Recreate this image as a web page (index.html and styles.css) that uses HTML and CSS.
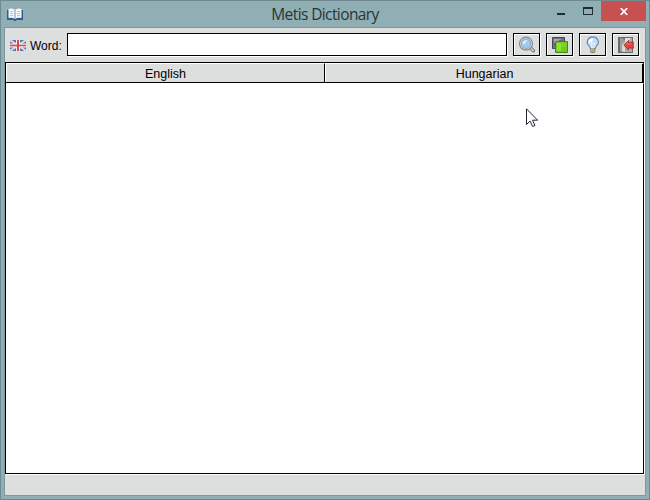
FILE: index.html
```html
<!DOCTYPE html>
<html lang="en">
<head>
<meta charset="utf-8">
<title>Metis Dictionary</title>
<link rel="stylesheet" href="styles.css">
</head>
<body>
<main class="window">
  <header class="titlebar">
    <svg class="app-icon" width="16" height="14" viewBox="0 0 16 14">
      <path d="M0 2h16v10H9.500l-1.500 1.500L6.500 12H0z" fill="#285f98"/>
      <path d="M1.500 1q4-1.500 6.500 1v9q-3-2-6.500-1zM14.500 1q-4-1.500-6.500 1v9q3-2 6.500-1z" fill="#f7f7f7"/>
      <path d="M3 3.500h3M3 5.500h3M3 7.500h3M10 3.500h3M10 5.500h3M10 7.500h3" stroke="#c3c4c4"/>
      <path d="M8 2v9" stroke="#8397a8"/>
    </svg>
    <h1 class="title">Metis Dictionary</h1>
    <div class="controls">
      <button class="control minimize" aria-label="Minimize"><svg width="8" height="2"><path d="M0 0h8v2H0z" fill="#222b2d"/></svg></button>
      <button class="control maximize" aria-label="Maximize"><svg width="10" height="8"><path d="M0 0h10v8H0zM1 2v5h8V2z" fill="#222b2d" fill-rule="evenodd"/></svg></button>
      <button class="control close" aria-label="Close"><svg width="8" height="7" viewBox="0 0 8 7"><path d="M.7 0 7.300 7M7.300 0 .7 7" stroke="#fff" stroke-width="1.700"/></svg></button>
    </div>
  </header>
  <section class="client">
    <div class="toolbar">
      <svg class="flag" width="16" height="11" viewBox="0 0 16 11">
        <path d="M0 0h16v11H0z" fill="#4b78b0"/>
        <path d="M0 0l16 11M16 0L0 11" stroke="#e9edf3" stroke-width="1.900"/>
        <path d="M0 0l16 11M16 0L0 11" stroke="#df9ba2" stroke-width=".5"/>
        <path d="M8 0v11M0 5.500h16" stroke="#f5eeee" stroke-width="4"/>
        <path d="M8 0v11" stroke="#d54a50" stroke-width="2"/>
        <path d="M0 5.500h16" stroke="#d54a50" stroke-width="1.600"/>
      </svg>
      <label class="word-label" for="word">Word:</label>
      <input class="word" id="word" type="text">
      <div class="tools">
        <button class="tool" aria-label="Search"><svg width="18" height="18" viewBox="0 0 18 18">
          <path d="M12 11.500l3.400 3.200" stroke="#777c80" stroke-width="3.600" stroke-linecap="round"/>
          <path d="M12.500 12l2.700 2.500" stroke="#d8dcdf" stroke-width="1.500" stroke-linecap="round"/>
          <circle cx="8" cy="7.700" r="6.500" fill="#e0e4e7" stroke="#858b90" stroke-width="1.200"/>
          <circle cx="8" cy="7.700" r="4.800" fill="#a3c9f0" stroke="#7790a9" stroke-width=".8"/>
          <path d="M4.500 8.500q0-4.500 4.500-4.500-1 3.500-4.500 4.500" fill="#e0effd"/>
        </svg></button>
        <button class="tool" aria-label="Dictionaries"><svg width="18" height="18" viewBox="0 0 18 18">
          <path d="M1.500 1.500h12v11h-12z" fill="#77717d" stroke="#51415c"/>
          <path d="M3 3h8v7H3z" fill="#aaa5af"/><path d="M3 7l8-4v7H3z" fill="#69616f"/>
          <path d="M4.500 5.500h12v11h-12z" fill="#70c91b" stroke="#3a900c"/>
          <path d="M6 7h4v8H6z" fill="#91dd43"/><path d="M10 7h5v4h-5z" fill="#7ed529"/>
        </svg></button>
        <button class="tool" aria-label="Hints"><svg width="18" height="18" viewBox="0 0 18 18">
          <path d="M6.300 12.500q0-1.500-1.700-3C1.500 6 4 .9 8.800.9s7.300 5.100 4.200 8.600q-1.700 1.500-1.700 3z" fill="#c5def5" stroke="#7288aa" stroke-width="1.100"/>
          <path d="M5 7.200q-1-4.500 4-4.700 0 3.500-4 4.700" fill="#fff"/>
          <path d="M7.300 7.500l.7 4.500M10.500 7.500L9.800 12M7 7.500h4" fill="none" stroke="#edf5fb"/>
          <path d="M6.300 12h5v4l-1.400 1H7.700l-1.400-1z" fill="#77776a"/>
          <path d="M7 12.500h3.500v1H7zM7 14.500h3.500v1H7z" fill="#e6e8b5"/>
        </svg></button>
        <button class="tool" aria-label="Exit"><svg width="18" height="18" viewBox="0 0 18 18">
          <path d="M1 1h15v16H1z" fill="#666b6b"/>
          <path d="M8 2h7v14H8z" fill="#a9adaf"/>
          <path d="M8 2h6L8 8z" fill="#e1e4e5"/>
          <path d="M3 2h2l3 2v12l-5-.5z" fill="#999ea0"/>
          <path d="M5 15.500V9l3-3v10z" fill="#d8dbdc"/>
          <path d="M6.800 9l4.700-4.500V7q2.500-1.200 5-.6-.8 2.800 0 5.700-2.500.6-5-.6v2.600z" fill="#dc463e" stroke="#b72220" stroke-width=".8"/>
          <path d="M8.500 9L11 6.700v1.500l3.500-.4" fill="none" stroke="#ee7770"/>
        </svg></button>
      </div>
    </div>
    <div class="table">
      <div class="head">
        <div class="cell">English</div>
        <div class="cell last">Hungarian</div>
      </div>
      <div class="body"></div>
    </div>
    <div class="status"></div>
  </section>
  <svg class="pointer" width="13" height="20" viewBox="0 0 13 20"><path d="M.5.8v15.700l3.600-3.400 2.500 5.400 2.400-1-2.500-5.300h5.100z" fill="#fff" stroke="#2b2132"/></svg>
</main>
</body>
</html>
```

FILE: styles.css
```css
* { box-sizing: border-box; }
body { margin: 0; overflow: hidden; font: 12px "Liberation Sans", Arial, sans-serif; color: #000; }
button { padding: 0; border: 0; border-radius: 0; background: none; }
svg { display: block; flex: none; }

.window {
  position: relative;
  display: flex;
  flex-direction: column;
  width: 650px;
  height: 500px;
  padding: 0 3px 3px;
  border: 1px solid #6f8b90;
  background: #8fafb4;
}
.titlebar { display: grid; grid-template-columns: 110px 1fr 110px; height: 26px; flex: none; }
.app-icon { margin: 7px 0 0 3px; }
.title {
  margin: 3px 0 0 0;
  font: 400 15.5px/20px "Open Sans", "Noto Sans", sans-serif;
  letter-spacing: -0.6px;
  text-align: center;
  color: #2b3436;
}
.controls { display: flex; justify-content: flex-end; height: 20px; }
.control { display: flex; flex: none; align-items: center; justify-content: center; width: 27px; height: 20px; }
.close { width: 45px; background: #c75050; }
.minimize { padding-top: 5px; }

.client {
  display: flex;
  flex-direction: column;
  flex: 1;
  min-height: 0;
  border: 1px solid #7b999e;
  background: #dddfde;
}
.toolbar { display: flex; align-items: flex-start; height: 34px; padding: 5px 6px 0 5px; flex: none; }
.flag { margin-top: 7px; }
.word-label { width: 37px; margin: 6px 0 0 4px; line-height: 15px; white-space: nowrap; }
.word, .tool { height: 23px; border: 1px solid #000; box-shadow: 1px 1px #fff; }
.word { width: 440px; padding: 2px; border-radius: 0; background: #fff; outline: 0; font: inherit; }
.tools { display: flex; gap: 6px; margin-left: 6px; }
.tool { display: flex; align-items: center; justify-content: center; width: 27px; background: #dddfde; box-shadow: 1px 1px #fff, inset 1px 1px #fff; }

.table {
  display: flex;
  flex-direction: column;
  height: 412px;
  margin-right: 1px;
  border: 1px solid #000;
  border-right: 0;
  box-shadow: 1px 1px #fff;
}
.head { display: flex; height: 20px; flex: none; border-bottom: 1px solid #000; }
.cell {
  width: 319px;
  border-top: 1px solid #fff;
  border-left: 1px solid #fff;
  border-right: 1px solid #000;
  font-size: 12.5px;
  line-height: 20px;
  text-align: center;
}
.last { border-right-width: 2px; padding-left: 1px; }
.body { flex: 1; border-top: 1px solid #fff; border-right: 1px solid #000; background: #fff; }
.status { flex: 1; }

.pointer { position: absolute; left: 525px; top: 107px; }
```
